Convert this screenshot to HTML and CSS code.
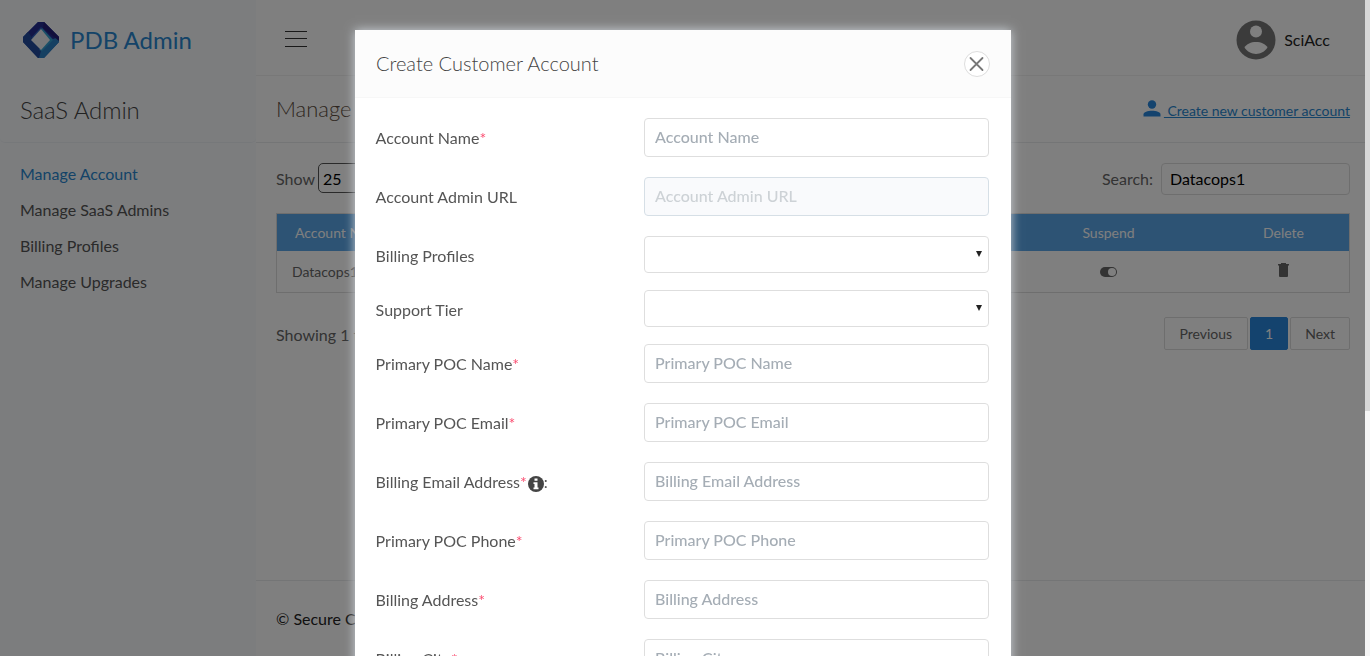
FILE: index.html
```html
<!DOCTYPE html>
<html lang="en">
<head>
<meta charset="utf-8">
<title>PDB Admin</title>
<link rel="stylesheet" href="styles.css">
</head>
<body>
<div class="app">
  <aside class="sidebar">
    <div class="brand">
      <svg class="brand-logo" width="38" height="38" viewBox="0 0 38 38">
        <path d="M16 1h6l15 15v5L22 37h-6L1 21v-5z" fill="#2f60bc"/>
        <path d="M16 1h6l15 15-3 5L19 6 9 17l-5-4z" fill="#242c90"/>
        <path d="M1 16l5-5 14 19-3 7h-1L1 21z" fill="#234a9c"/>
        <path d="M37 16v5L22 37h-5l2-7 12-12z" fill="#2b80c4"/>
        <path d="M22 1l15 15v4L21 7z" fill="#241f78"/>
        <path d="M20 7l11 12-11 11-3-1 9-10-7-8z" fill="#35a0d0"/>
        <path d="M19 8l9 11-9 10-10-10z" fill="#eef1f5"/>
      </svg>
      <span class="brand-name">PDB Admin</span>
    </div>
    <h2 class="section-title">SaaS Admin</h2>
    <nav class="menu">
      <a class="menu-item active">Manage Account</a>
      <a class="menu-item">Manage SaaS Admins</a>
      <a class="menu-item">Billing Profiles</a>
      <a class="menu-item">Manage Upgrades</a>
    </nav>
  </aside>
  <div class="main">
    <header class="topbar">
      <svg class="burger" width="22" height="18" viewBox="0 0 22 18"><path d="M0 1.500h22M0 8.500h22M0 16.500h22" stroke="#333" fill="none"/></svg>
      <div class="user">
        <svg width="40" height="40" viewBox="0 0 40 40"><circle cx="20" cy="20" r="19.500" fill="#777"/><circle cx="20" cy="11.500" r="6" fill="#fff"/><path d="M8.500 27.500C12 20 28 20 31.500 27.500 26 36 14 36 8.500 27.500z" fill="#fff"/></svg>
        <span>SciAcc</span>
      </div>
    </header>
    <div class="page-head">
      <h1>Manage Account</h1>
      <a class="create"><svg width="18" height="17" viewBox="0 0 18 17"><circle cx="9" cy="4.500" r="4.200" fill="#2887dd"/><path d="M.5 16.500v-2C.5 9.500 17.500 9.500 17.500 14.500v2z" fill="#2887dd"/></svg><span class="create-text">&nbsp;Create new customer account</span></a>
    </div>
    <section class="content">
      <div class="tools">
        <label class="show">Show <span class="count">25</span></label>
        <label class="search">Search: <input class="search-input" value="Datacops1"></label>
      </div>
      <div class="table">
        <div class="tr head"><span class="name">Account Name</span><span class="suspend">Suspend</span><span class="delete">Delete</span></div>
        <div class="tr"><span class="name">Datacops1</span>
          <span class="suspend"><svg width="17" height="10" viewBox="0 0 17 10"><rect width="17" height="10" rx="5" fill="#666"/><circle cx="12" cy="5" r="4" fill="#fff"/></svg></span>
          <span class="delete"><svg width="11" height="14" viewBox="0 0 11 14"><path d="M0 1h3V0h5v1h3v1.500h-1V13q0 1-1 1H2q-1 0-1-1V2.500H0z" fill="#666"/></svg></span></div>
      </div>
      <div class="summary"><span>Showing 1 to 1 of 1</span>
        <div class="pager"><span class="page">Previous</span><span class="page current">1</span><span class="page">Next</span></div>
      </div>
    </section>
    <footer class="footer">© Secure Cloud</footer>
  </div>
</div>
<div class="scrollbar"><div class="thumb"></div></div>
<div class="overlay">
  <div class="modal">
    <div class="modal-head">
      <h3>Create Customer Account</h3>
      <svg class="close" width="26" height="26" viewBox="0 0 26 26"><circle cx="13" cy="13" r="12.500" fill="#fff" stroke="#ddd"/><path d="M6.500 7l12 12M18.500 7l-12 12" stroke="#777" stroke-width="1.800" stroke-linecap="round"/></svg>
    </div>
    <form class="form">
      <div class="row"><label>Account Name<i>*</i></label><input placeholder="Account Name"></div>
      <div class="row"><label>Account Admin URL</label><input placeholder="Account Admin URL" disabled></div>
      <div class="row short"><label>Billing Profiles</label><div class="select"><span class="arrow"></span></div></div>
      <div class="row short"><label>Support Tier</label><div class="select"><span class="arrow"></span></div></div>
      <div class="row"><label>Primary POC Name<i>*</i></label><input placeholder="Primary POC Name"></div>
      <div class="row"><label>Primary POC Email<i>*</i></label><input placeholder="Primary POC Email"></div>
      <div class="row"><label>Billing Email Address<i>*</i><svg class="info" width="16" height="16" viewBox="0 0 16 16"><circle cx="8" cy="8" r="8" fill="#444"/><path d="M6.500 2.500h3v2.300h-3zM5.500 6.200h4v5.300h1v1.700h-5v-1.700h1V7.900h-1z" fill="#fff"/></svg>:</label><input placeholder="Billing Email Address"></div>
      <div class="row"><label>Primary POC Phone<i>*</i></label><input placeholder="Primary POC Phone"></div>
      <div class="row"><label>Billing Address<i>*</i></label><input placeholder="Billing Address"></div>
      <div class="row"><label>Billing City<i>*</i></label><input placeholder="Billing City"></div>
    </form>
  </div>
</div>
</body>
</html>
```
FILE: styles.css
```css
* { box-sizing: border-box; }
html, body { margin: 0; height: 656px; overflow: hidden; }
body { font: 16px/20px Lato, sans-serif; color: #666; background: #fff; }
svg { display: block; flex: none; }
h1, h2, h3 { margin: 0; font-weight: 300; }
input { font-family: inherit; }
.app { display: flex; width: 1365px; height: 656px; }
.sidebar { width: 256px; flex: none; background: #f9fbfd; }
.brand { display: flex; align-items: center; height: 79px; padding-left: 22px; gap: 10px; }
.brand-name { font-size: 24px; line-height: 30px; color: #2887d0; padding-top: 1px; }
.section-title { height: 64px; padding: 16px 20px 0; font-size: 24px; line-height: 30px; letter-spacing: -.1px; color: #444; border-bottom: 1px solid #edf1f5; border-radius: 0 0 5px 5px; }
.menu { display: flex; flex-direction: column; gap: 16px; padding: 21px 20px; }
.menu-item { color: #555; }
.menu-item.active { color: #2887d0; }
.main { flex: 1; display: flex; flex-direction: column; min-width: 0; }
.topbar { display: flex; justify-content: space-between; align-items: center; height: 76px; padding: 3px 35px 0 29px; border-bottom: 1px solid #f1f1f1; }
.user { display: flex; align-items: center; gap: 8px; color: #222; padding-top: 2px; }
.page-head { display: flex; justify-content: space-between; height: 67px; padding: 18px 15px 0 20px; border-bottom: 1px solid #e8eaec; }
h1 { font-size: 22px; line-height: 30px; color: #5c4c40; white-space: nowrap; }
.create { display: flex; color: #2887d0; font-size: 14px; padding-top: 6px; gap: 3px; }
.create-text { text-decoration: underline; line-height: 22px; letter-spacing: -.02px; }
.content { padding: 20px 15px 0 20px; }
.tools { display: flex; justify-content: space-between; align-items: center; height: 32px; }
.show, .search { display: flex; align-items: center; }
.count { width: 70px; height: 30px; margin: 0 0 2px 3px; border: 1px solid #555; border-radius: 5px; color: #000; padding: 5px 4px; }
.search-input { width: 189px; height: 32px; margin-left: 8px; border: 1px solid #ddd; border-radius: 4px; padding: 0 8px 2px; font-size: 16px; color: #000; background: #fff; }
.table { margin-top: 18px; border: 1px solid #ddd; font-size: 14px; }
.tr { display: grid; grid-template-columns: 744px 175px 1fr; height: 41px; align-items: center; }
.tr.head { height: 37px; background: #5aa6e8; color: #fff; }
.tr .name { padding-left: 15px; }
.head .name { padding-left: 18px; }
.suspend, .delete { display: flex; justify-content: center; }
.delete { padding-left: 22px; }
.delete svg { margin-bottom: 4px; }
.summary { display: flex; justify-content: space-between; padding-top: 24px; }
.summary > span { padding-top: 8px; }
.pager { display: flex; gap: 2px; font-size: 14px; }
.page { height: 33px; padding: 6px 14px; border: 1px solid #ddd; border-radius: 2px; }
.page:first-child { padding-right: 15px; }
.page.current { background: #2887dd; border-color: #2887dd; color: #fff; }
.footer { margin-top: auto; height: 76px; padding: 28px 20px; border-top: 1px solid #e8eaec; color: #222; }
.scrollbar { position: fixed; top: 0; right: 0; width: 5px; height: 656px; background: #f5f5f5; }
.thumb { height: 411px; background: #d8d8d8; }
.overlay { position: fixed; top: 0; left: 0; width: 1365px; height: 656px; padding: 30px 0 0 355px; background: rgba(0,0,0,.5); overflow: hidden; }
.modal { width: 656px; height: 700px; background: #fff; box-shadow: 0 0 10px #ced4da; color: #555; }
.modal-head { display: flex; justify-content: space-between; align-items: center; height: 68px; padding: 0 21px 0 21px; background: #fcfcfc; border-bottom: 1px solid #f7f7f7; }
h3 { font-size: 20px; line-height: 24px; color: #444; padding-bottom: 2px; }
.form { padding: 20px 22px 0 21px; }
.row { display: grid; grid-template-columns: 268px 345px; height: 59px; align-items: start; }
.row.short { height: 54px; }
.row label { display: flex; padding-top: 10px; margin-left: -.4px; }
.row i { font-style: normal; color: #fb4d70; }
.info { margin-top: 4px; margin-left: 1px; }
.row input { width: 345px; height: 39px; padding: 0 10px 3px; border: 1px solid #dedede; border-radius: 4px; font-size: 16px; font-weight: 500; background: #fff; }
.row input::placeholder { color: #a5adb5; opacity: 1; }
.row input:disabled { background: #f9fafc; border-color: #d6dfe6; }
.row input:disabled::placeholder { color: #cdd2d6; }
.select { display: flex; justify-content: flex-end; height: 37px; padding: 14px 6px 0; border: 1px solid #dedede; border-radius: 4px; }
.arrow { width: 6px; height: 6px; background: #222; clip-path: polygon(0 0, 100% 0, 50% 100%); }
```
